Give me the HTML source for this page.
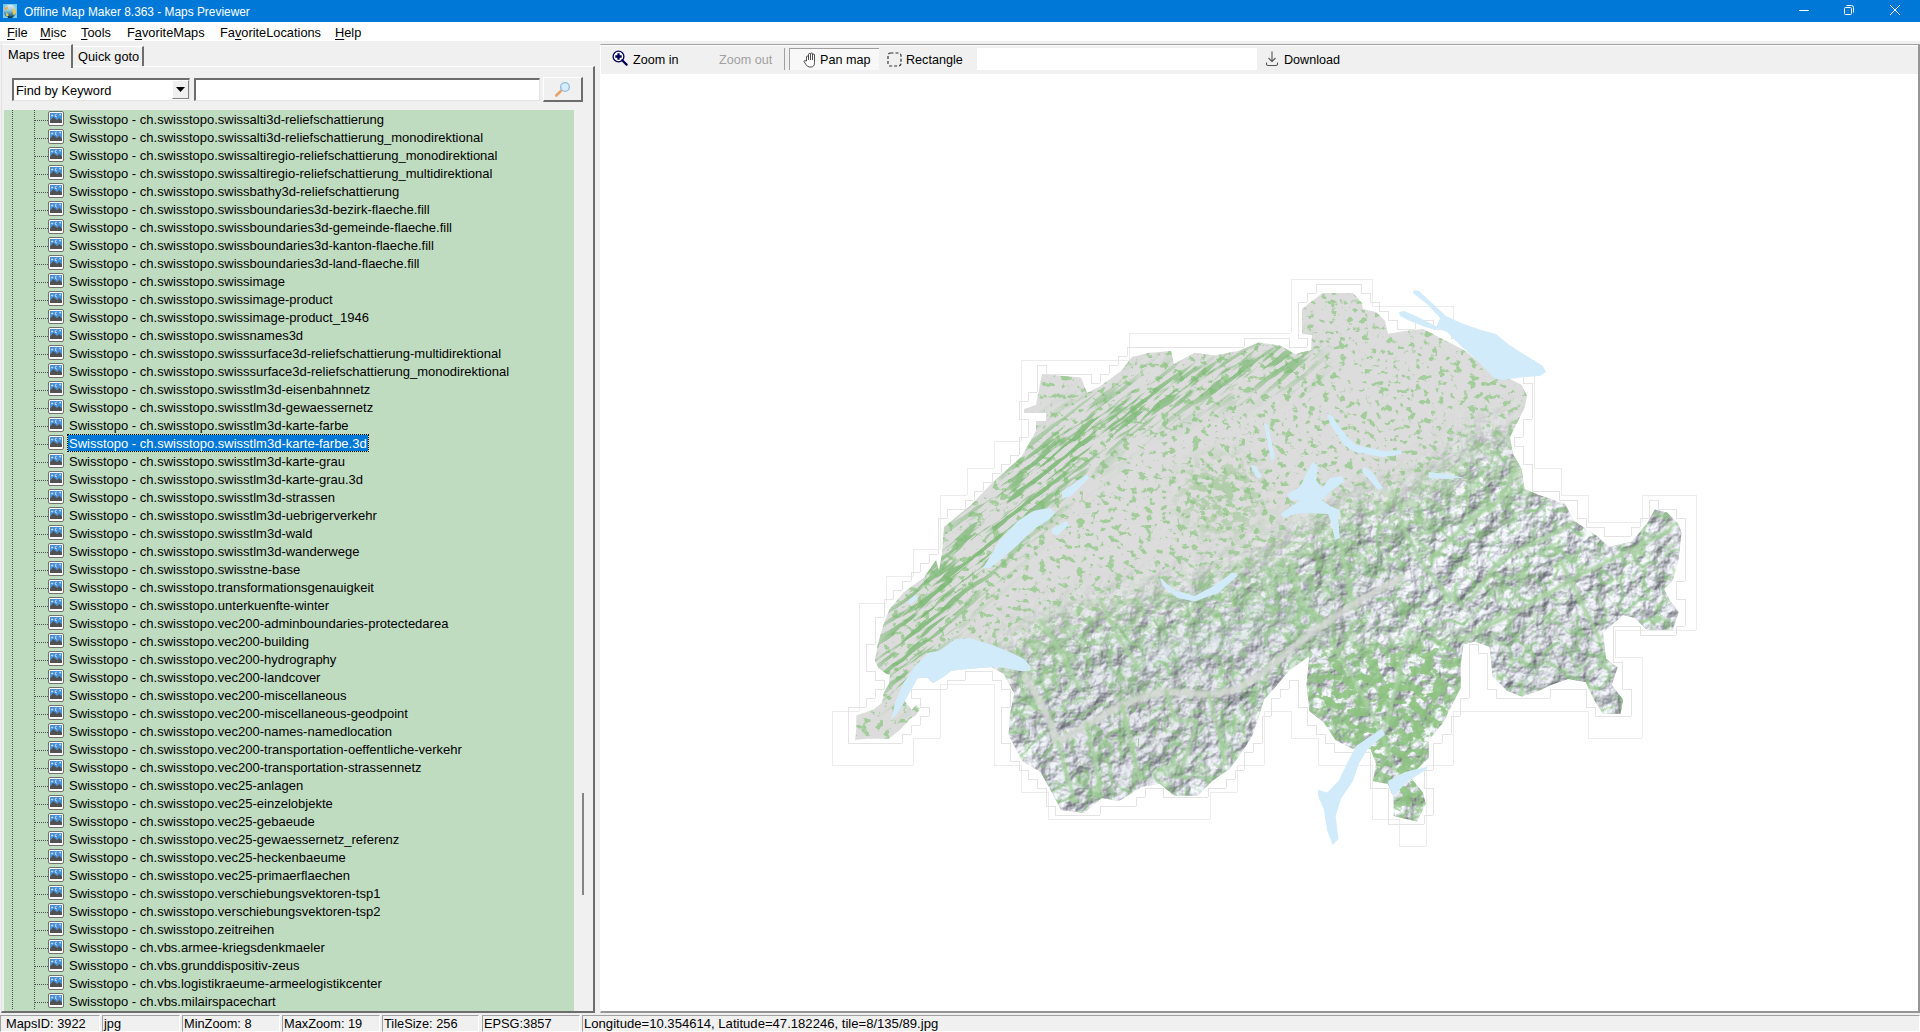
<!DOCTYPE html>
<html><head><meta charset="utf-8"><style>
*{box-sizing:border-box;margin:0;padding:0}
html,body{width:1920px;height:1032px;overflow:hidden;background:#f0f0f0;font-family:"Liberation Sans",sans-serif;color:#000}
.abs{position:absolute}
#title{position:absolute;left:0;top:0;width:1920px;height:22px;background:#0078d7;color:#fff;font-size:11.9px}
#title .txt{position:absolute;left:24px;top:5px;line-height:14px;white-space:nowrap}
#menu{position:absolute;left:0;top:22px;width:1920px;height:19px;background:#fff;font-size:12.8px}
#menu span{position:absolute;top:3px;line-height:15px;white-space:nowrap}
.u{text-decoration:underline;text-underline-offset:2px}
.tab{position:absolute;font-size:12.8px;white-space:nowrap;z-index:3}
#page{position:absolute;left:1px;top:66px;width:594px;height:947px;border-left:1px solid #e3e3e3;border-top:1px solid #fff;border-right:2px solid #6d6d6d;border-bottom:2px solid #6d6d6d;}
#tree{position:absolute;left:4px;top:110px;width:570px;height:901px;background:#c0dcc0;overflow:hidden}
.row{position:absolute;left:0;width:570px;height:18px}
.row .ic{position:absolute;left:44px;top:1px}
.row .t{position:absolute;left:64px;top:2px;font-size:13px;line-height:16px;white-space:nowrap;padding:0 1px}
.row .t.sel{background:#0078d7;color:#fff;outline:1px dotted #000;outline-offset:0;top:1px;padding-top:1px;height:16px}
.vdots{position:absolute;top:0;width:1px;height:900px;background:repeating-linear-gradient(#505050 0 1px,transparent 1px 2px)}
.hdots{position:absolute;left:31px;top:10px;width:13px;height:1px;background:repeating-linear-gradient(90deg,#505050 0 1px,transparent 1px 2px)}
#status{position:absolute;left:0;top:1014px;width:1920px;height:18px;font-size:12.8px}
.sp{position:absolute;top:1px;height:17px;border-top:1px solid #a0a0a0;border-left:1px solid #a0a0a0;border-right:1px solid #fff;border-bottom:1px solid #fff;white-space:nowrap;padding-left:1px;line-height:15px}
#mappanel{position:absolute;left:600px;top:44px;width:1320px;height:969px;border-top:1px solid #a0a0a0;border-left:1px solid #fff;border-right:2px solid #969696;border-bottom:2px solid #969696;background:#fff}
#toolbar{position:absolute;left:0;top:1px;width:1317px;height:28px;background:#f0f0f0;font-size:12.6px}
#toolbar span{position:absolute;top:7px;line-height:15px;white-space:nowrap}
</style></head><body>
<div id="title">
 <svg class="abs" style="left:3px;top:4px" width="15" height="15" viewBox="0 0 15 15"><defs><linearGradient id="gl" x1="0" y1="0" x2="0" y2="1"><stop offset="0" stop-color="#e8f0e8"/><stop offset="0.45" stop-color="#8cc8e0"/><stop offset="1" stop-color="#0f4a66"/></linearGradient></defs><rect x="0" y="0" width="14" height="14" fill="#7ccbef"/><circle cx="7" cy="7.2" r="6.4" fill="url(#gl)"/><path d="M1.2 5 Q2.5 2.2 5 2.5 Q5.5 4.5 3.5 5.8 Q2 6.5 1.2 5Z" fill="#f0a850"/><path d="M9.8 4.2 Q12.8 5 13 8.5 Q12.5 11 10.5 11 Q9.5 8 9.8 4.2Z" fill="#f5c84a"/><path d="M3 8.8 Q5.5 9 5.6 11.5 Q4.5 13 3.2 12 Q2.8 10 3 8.8Z" fill="#d8c860"/><path d="M5 12 Q8 13.5 11 12 L9 14 H5Z" fill="#0a3a50"/></svg>
 <div class="txt">Offline Map Maker 8.363 - Maps Previewer</div>
 <svg class="abs" style="left:1790px;top:0" width="130" height="22" viewBox="0 0 130 22">
  <line x1="9" y1="10.5" x2="19" y2="10.5" stroke="#fff" stroke-width="1"/>
  <rect x="54.5" y="7.5" width="7" height="7" fill="none" stroke="#fff" stroke-width="1" rx="1"/>
  <path d="M56.5 5.5 h5 a2 2 0 0 1 2 2 v5" fill="none" stroke="#fff" stroke-width="1"/>
  <path d="M100 5 L110 15 M110 5 L100 15" stroke="#fff" stroke-width="1"/>
 </svg>
</div>
<div id="menu">
 <span style="left:7px"><span class="u" style="position:static">F</span>ile</span>
 <span style="left:40px"><span class="u" style="position:static">M</span>isc</span>
 <span style="left:81px"><span class="u" style="position:static">T</span>ools</span>
 <span style="left:127px">F<span class="u" style="position:static">a</span>voriteMaps</span>
 <span style="left:220px">Fa<span class="u" style="position:static">v</span>oriteLocations</span>
 <span style="left:335px"><span class="u" style="position:static">H</span>elp</span>
</div>
<!-- tabs -->
<div class="abs" style="left:1px;top:44px;width:72px;height:24px;background:#f0f0f0;border-top:1px solid #fff;border-left:1px solid #e3e3e3;border-right:2px solid #6d6d6d;z-index:2"></div>
<div class="tab" style="left:8px;top:47px">Maps tree</div>
<div class="abs" style="left:73px;top:46px;width:71px;height:20px;border-top:1px solid #fff;border-right:2px solid #6d6d6d"></div>
<div class="tab" style="left:78px;top:49px">Quick goto</div>
<div id="page"></div>
<!-- combobox -->
<div class="abs" style="left:12px;top:78px;width:178px;height:23px;background:#fff;border-top:2px solid #6d6d6d;border-left:2px solid #6d6d6d;border-right:1px solid #e3e3e3;border-bottom:1px solid #e3e3e3"></div>
<div class="abs" style="left:16px;top:83px;font-size:12.8px;line-height:15px">Find by Keyword</div>
<div class="abs" style="left:172px;top:80px;width:17px;height:19px;background:#f0f0f0;border-right:1px solid #808080;border-bottom:1px solid #808080;border-top:1px solid #fff;border-left:1px solid #fff"></div>
<svg class="abs" style="left:176px;top:87px" width="9" height="5"><path d="M0 0 H9 L4.5 5Z" fill="#000"/></svg>
<div class="abs" style="left:194px;top:78px;width:346px;height:23px;background:#fff;border-top:2px solid #6d6d6d;border-left:2px solid #6d6d6d;border-right:1px solid #e3e3e3;border-bottom:1px solid #e3e3e3"></div>
<div class="abs" style="left:543px;top:77px;width:40px;height:25px;background:#f0f0f0;border-top:1px solid #fff;border-left:1px solid #fff;border-right:2px solid #6d6d6d;border-bottom:2px solid #6d6d6d"></div>
<svg class="abs" style="left:554px;top:80px" width="18" height="18" viewBox="0 0 18 18"><line x1="2.3" y1="15.5" x2="7.5" y2="10.3" stroke="#e8a268" stroke-width="2.6" stroke-linecap="round"/><circle cx="11" cy="7" r="4.4" fill="#d4ecfc" stroke="#96bde0" stroke-width="1.4"/></svg>
<div id="tree">
 <div class="vdots" style="left:8px"></div>
 <div class="vdots" style="left:30px"></div>
<div class="row" style="top:0px"><div class="hdots"></div><svg class="ic" width="16" height="15" viewBox="0 0 16 15"><rect x="0.5" y="0.5" width="15" height="14" rx="1.5" fill="#fff" stroke="#707070"/><rect x="2" y="2" width="12" height="10" fill="#4790d8"/><path d="M2 12 L2 9.5 L5.5 6 L9 9 L11.5 7 L14 9.5 L14 12Z" fill="#525252"/><path d="M3.2 4.5 H5.2 M4.2 3.5 V5.5 M11.3 3.6 H13.1 M12.2 2.7 V4.5" stroke="#d8ecff" stroke-width="0.8"/><path d="M8.6 3.2 a1.4 1.4 0 1 0 0.2 2.8" stroke="#e8f4ff" stroke-width="0.9" fill="none"/></svg><span class="t">Swisstopo - ch.swisstopo.swissalti3d-reliefschattierung</span></div>
<div class="row" style="top:18px"><div class="hdots"></div><svg class="ic" width="16" height="15" viewBox="0 0 16 15"><rect x="0.5" y="0.5" width="15" height="14" rx="1.5" fill="#fff" stroke="#707070"/><rect x="2" y="2" width="12" height="10" fill="#4790d8"/><path d="M2 12 L2 9.5 L5.5 6 L9 9 L11.5 7 L14 9.5 L14 12Z" fill="#525252"/><path d="M3.2 4.5 H5.2 M4.2 3.5 V5.5 M11.3 3.6 H13.1 M12.2 2.7 V4.5" stroke="#d8ecff" stroke-width="0.8"/><path d="M8.6 3.2 a1.4 1.4 0 1 0 0.2 2.8" stroke="#e8f4ff" stroke-width="0.9" fill="none"/></svg><span class="t">Swisstopo - ch.swisstopo.swissalti3d-reliefschattierung_monodirektional</span></div>
<div class="row" style="top:36px"><div class="hdots"></div><svg class="ic" width="16" height="15" viewBox="0 0 16 15"><rect x="0.5" y="0.5" width="15" height="14" rx="1.5" fill="#fff" stroke="#707070"/><rect x="2" y="2" width="12" height="10" fill="#4790d8"/><path d="M2 12 L2 9.5 L5.5 6 L9 9 L11.5 7 L14 9.5 L14 12Z" fill="#525252"/><path d="M3.2 4.5 H5.2 M4.2 3.5 V5.5 M11.3 3.6 H13.1 M12.2 2.7 V4.5" stroke="#d8ecff" stroke-width="0.8"/><path d="M8.6 3.2 a1.4 1.4 0 1 0 0.2 2.8" stroke="#e8f4ff" stroke-width="0.9" fill="none"/></svg><span class="t">Swisstopo - ch.swisstopo.swissaltiregio-reliefschattierung_monodirektional</span></div>
<div class="row" style="top:54px"><div class="hdots"></div><svg class="ic" width="16" height="15" viewBox="0 0 16 15"><rect x="0.5" y="0.5" width="15" height="14" rx="1.5" fill="#fff" stroke="#707070"/><rect x="2" y="2" width="12" height="10" fill="#4790d8"/><path d="M2 12 L2 9.5 L5.5 6 L9 9 L11.5 7 L14 9.5 L14 12Z" fill="#525252"/><path d="M3.2 4.5 H5.2 M4.2 3.5 V5.5 M11.3 3.6 H13.1 M12.2 2.7 V4.5" stroke="#d8ecff" stroke-width="0.8"/><path d="M8.6 3.2 a1.4 1.4 0 1 0 0.2 2.8" stroke="#e8f4ff" stroke-width="0.9" fill="none"/></svg><span class="t">Swisstopo - ch.swisstopo.swissaltiregio-reliefschattierung_multidirektional</span></div>
<div class="row" style="top:72px"><div class="hdots"></div><svg class="ic" width="16" height="15" viewBox="0 0 16 15"><rect x="0.5" y="0.5" width="15" height="14" rx="1.5" fill="#fff" stroke="#707070"/><rect x="2" y="2" width="12" height="10" fill="#4790d8"/><path d="M2 12 L2 9.5 L5.5 6 L9 9 L11.5 7 L14 9.5 L14 12Z" fill="#525252"/><path d="M3.2 4.5 H5.2 M4.2 3.5 V5.5 M11.3 3.6 H13.1 M12.2 2.7 V4.5" stroke="#d8ecff" stroke-width="0.8"/><path d="M8.6 3.2 a1.4 1.4 0 1 0 0.2 2.8" stroke="#e8f4ff" stroke-width="0.9" fill="none"/></svg><span class="t">Swisstopo - ch.swisstopo.swissbathy3d-reliefschattierung</span></div>
<div class="row" style="top:90px"><div class="hdots"></div><svg class="ic" width="16" height="15" viewBox="0 0 16 15"><rect x="0.5" y="0.5" width="15" height="14" rx="1.5" fill="#fff" stroke="#707070"/><rect x="2" y="2" width="12" height="10" fill="#4790d8"/><path d="M2 12 L2 9.5 L5.5 6 L9 9 L11.5 7 L14 9.5 L14 12Z" fill="#525252"/><path d="M3.2 4.5 H5.2 M4.2 3.5 V5.5 M11.3 3.6 H13.1 M12.2 2.7 V4.5" stroke="#d8ecff" stroke-width="0.8"/><path d="M8.6 3.2 a1.4 1.4 0 1 0 0.2 2.8" stroke="#e8f4ff" stroke-width="0.9" fill="none"/></svg><span class="t">Swisstopo - ch.swisstopo.swissboundaries3d-bezirk-flaeche.fill</span></div>
<div class="row" style="top:108px"><div class="hdots"></div><svg class="ic" width="16" height="15" viewBox="0 0 16 15"><rect x="0.5" y="0.5" width="15" height="14" rx="1.5" fill="#fff" stroke="#707070"/><rect x="2" y="2" width="12" height="10" fill="#4790d8"/><path d="M2 12 L2 9.5 L5.5 6 L9 9 L11.5 7 L14 9.5 L14 12Z" fill="#525252"/><path d="M3.2 4.5 H5.2 M4.2 3.5 V5.5 M11.3 3.6 H13.1 M12.2 2.7 V4.5" stroke="#d8ecff" stroke-width="0.8"/><path d="M8.6 3.2 a1.4 1.4 0 1 0 0.2 2.8" stroke="#e8f4ff" stroke-width="0.9" fill="none"/></svg><span class="t">Swisstopo - ch.swisstopo.swissboundaries3d-gemeinde-flaeche.fill</span></div>
<div class="row" style="top:126px"><div class="hdots"></div><svg class="ic" width="16" height="15" viewBox="0 0 16 15"><rect x="0.5" y="0.5" width="15" height="14" rx="1.5" fill="#fff" stroke="#707070"/><rect x="2" y="2" width="12" height="10" fill="#4790d8"/><path d="M2 12 L2 9.5 L5.5 6 L9 9 L11.5 7 L14 9.5 L14 12Z" fill="#525252"/><path d="M3.2 4.5 H5.2 M4.2 3.5 V5.5 M11.3 3.6 H13.1 M12.2 2.7 V4.5" stroke="#d8ecff" stroke-width="0.8"/><path d="M8.6 3.2 a1.4 1.4 0 1 0 0.2 2.8" stroke="#e8f4ff" stroke-width="0.9" fill="none"/></svg><span class="t">Swisstopo - ch.swisstopo.swissboundaries3d-kanton-flaeche.fill</span></div>
<div class="row" style="top:144px"><div class="hdots"></div><svg class="ic" width="16" height="15" viewBox="0 0 16 15"><rect x="0.5" y="0.5" width="15" height="14" rx="1.5" fill="#fff" stroke="#707070"/><rect x="2" y="2" width="12" height="10" fill="#4790d8"/><path d="M2 12 L2 9.5 L5.5 6 L9 9 L11.5 7 L14 9.5 L14 12Z" fill="#525252"/><path d="M3.2 4.5 H5.2 M4.2 3.5 V5.5 M11.3 3.6 H13.1 M12.2 2.7 V4.5" stroke="#d8ecff" stroke-width="0.8"/><path d="M8.6 3.2 a1.4 1.4 0 1 0 0.2 2.8" stroke="#e8f4ff" stroke-width="0.9" fill="none"/></svg><span class="t">Swisstopo - ch.swisstopo.swissboundaries3d-land-flaeche.fill</span></div>
<div class="row" style="top:162px"><div class="hdots"></div><svg class="ic" width="16" height="15" viewBox="0 0 16 15"><rect x="0.5" y="0.5" width="15" height="14" rx="1.5" fill="#fff" stroke="#707070"/><rect x="2" y="2" width="12" height="10" fill="#4790d8"/><path d="M2 12 L2 9.5 L5.5 6 L9 9 L11.5 7 L14 9.5 L14 12Z" fill="#525252"/><path d="M3.2 4.5 H5.2 M4.2 3.5 V5.5 M11.3 3.6 H13.1 M12.2 2.7 V4.5" stroke="#d8ecff" stroke-width="0.8"/><path d="M8.6 3.2 a1.4 1.4 0 1 0 0.2 2.8" stroke="#e8f4ff" stroke-width="0.9" fill="none"/></svg><span class="t">Swisstopo - ch.swisstopo.swissimage</span></div>
<div class="row" style="top:180px"><div class="hdots"></div><svg class="ic" width="16" height="15" viewBox="0 0 16 15"><rect x="0.5" y="0.5" width="15" height="14" rx="1.5" fill="#fff" stroke="#707070"/><rect x="2" y="2" width="12" height="10" fill="#4790d8"/><path d="M2 12 L2 9.5 L5.5 6 L9 9 L11.5 7 L14 9.5 L14 12Z" fill="#525252"/><path d="M3.2 4.5 H5.2 M4.2 3.5 V5.5 M11.3 3.6 H13.1 M12.2 2.7 V4.5" stroke="#d8ecff" stroke-width="0.8"/><path d="M8.6 3.2 a1.4 1.4 0 1 0 0.2 2.8" stroke="#e8f4ff" stroke-width="0.9" fill="none"/></svg><span class="t">Swisstopo - ch.swisstopo.swissimage-product</span></div>
<div class="row" style="top:198px"><div class="hdots"></div><svg class="ic" width="16" height="15" viewBox="0 0 16 15"><rect x="0.5" y="0.5" width="15" height="14" rx="1.5" fill="#fff" stroke="#707070"/><rect x="2" y="2" width="12" height="10" fill="#4790d8"/><path d="M2 12 L2 9.5 L5.5 6 L9 9 L11.5 7 L14 9.5 L14 12Z" fill="#525252"/><path d="M3.2 4.5 H5.2 M4.2 3.5 V5.5 M11.3 3.6 H13.1 M12.2 2.7 V4.5" stroke="#d8ecff" stroke-width="0.8"/><path d="M8.6 3.2 a1.4 1.4 0 1 0 0.2 2.8" stroke="#e8f4ff" stroke-width="0.9" fill="none"/></svg><span class="t">Swisstopo - ch.swisstopo.swissimage-product_1946</span></div>
<div class="row" style="top:216px"><div class="hdots"></div><svg class="ic" width="16" height="15" viewBox="0 0 16 15"><rect x="0.5" y="0.5" width="15" height="14" rx="1.5" fill="#fff" stroke="#707070"/><rect x="2" y="2" width="12" height="10" fill="#4790d8"/><path d="M2 12 L2 9.5 L5.5 6 L9 9 L11.5 7 L14 9.5 L14 12Z" fill="#525252"/><path d="M3.2 4.5 H5.2 M4.2 3.5 V5.5 M11.3 3.6 H13.1 M12.2 2.7 V4.5" stroke="#d8ecff" stroke-width="0.8"/><path d="M8.6 3.2 a1.4 1.4 0 1 0 0.2 2.8" stroke="#e8f4ff" stroke-width="0.9" fill="none"/></svg><span class="t">Swisstopo - ch.swisstopo.swissnames3d</span></div>
<div class="row" style="top:234px"><div class="hdots"></div><svg class="ic" width="16" height="15" viewBox="0 0 16 15"><rect x="0.5" y="0.5" width="15" height="14" rx="1.5" fill="#fff" stroke="#707070"/><rect x="2" y="2" width="12" height="10" fill="#4790d8"/><path d="M2 12 L2 9.5 L5.5 6 L9 9 L11.5 7 L14 9.5 L14 12Z" fill="#525252"/><path d="M3.2 4.5 H5.2 M4.2 3.5 V5.5 M11.3 3.6 H13.1 M12.2 2.7 V4.5" stroke="#d8ecff" stroke-width="0.8"/><path d="M8.6 3.2 a1.4 1.4 0 1 0 0.2 2.8" stroke="#e8f4ff" stroke-width="0.9" fill="none"/></svg><span class="t">Swisstopo - ch.swisstopo.swisssurface3d-reliefschattierung-multidirektional</span></div>
<div class="row" style="top:252px"><div class="hdots"></div><svg class="ic" width="16" height="15" viewBox="0 0 16 15"><rect x="0.5" y="0.5" width="15" height="14" rx="1.5" fill="#fff" stroke="#707070"/><rect x="2" y="2" width="12" height="10" fill="#4790d8"/><path d="M2 12 L2 9.5 L5.5 6 L9 9 L11.5 7 L14 9.5 L14 12Z" fill="#525252"/><path d="M3.2 4.5 H5.2 M4.2 3.5 V5.5 M11.3 3.6 H13.1 M12.2 2.7 V4.5" stroke="#d8ecff" stroke-width="0.8"/><path d="M8.6 3.2 a1.4 1.4 0 1 0 0.2 2.8" stroke="#e8f4ff" stroke-width="0.9" fill="none"/></svg><span class="t">Swisstopo - ch.swisstopo.swisssurface3d-reliefschattierung_monodirektional</span></div>
<div class="row" style="top:270px"><div class="hdots"></div><svg class="ic" width="16" height="15" viewBox="0 0 16 15"><rect x="0.5" y="0.5" width="15" height="14" rx="1.5" fill="#fff" stroke="#707070"/><rect x="2" y="2" width="12" height="10" fill="#4790d8"/><path d="M2 12 L2 9.5 L5.5 6 L9 9 L11.5 7 L14 9.5 L14 12Z" fill="#525252"/><path d="M3.2 4.5 H5.2 M4.2 3.5 V5.5 M11.3 3.6 H13.1 M12.2 2.7 V4.5" stroke="#d8ecff" stroke-width="0.8"/><path d="M8.6 3.2 a1.4 1.4 0 1 0 0.2 2.8" stroke="#e8f4ff" stroke-width="0.9" fill="none"/></svg><span class="t">Swisstopo - ch.swisstopo.swisstlm3d-eisenbahnnetz</span></div>
<div class="row" style="top:288px"><div class="hdots"></div><svg class="ic" width="16" height="15" viewBox="0 0 16 15"><rect x="0.5" y="0.5" width="15" height="14" rx="1.5" fill="#fff" stroke="#707070"/><rect x="2" y="2" width="12" height="10" fill="#4790d8"/><path d="M2 12 L2 9.5 L5.5 6 L9 9 L11.5 7 L14 9.5 L14 12Z" fill="#525252"/><path d="M3.2 4.5 H5.2 M4.2 3.5 V5.5 M11.3 3.6 H13.1 M12.2 2.7 V4.5" stroke="#d8ecff" stroke-width="0.8"/><path d="M8.6 3.2 a1.4 1.4 0 1 0 0.2 2.8" stroke="#e8f4ff" stroke-width="0.9" fill="none"/></svg><span class="t">Swisstopo - ch.swisstopo.swisstlm3d-gewaessernetz</span></div>
<div class="row" style="top:306px"><div class="hdots"></div><svg class="ic" width="16" height="15" viewBox="0 0 16 15"><rect x="0.5" y="0.5" width="15" height="14" rx="1.5" fill="#fff" stroke="#707070"/><rect x="2" y="2" width="12" height="10" fill="#4790d8"/><path d="M2 12 L2 9.5 L5.5 6 L9 9 L11.5 7 L14 9.5 L14 12Z" fill="#525252"/><path d="M3.2 4.5 H5.2 M4.2 3.5 V5.5 M11.3 3.6 H13.1 M12.2 2.7 V4.5" stroke="#d8ecff" stroke-width="0.8"/><path d="M8.6 3.2 a1.4 1.4 0 1 0 0.2 2.8" stroke="#e8f4ff" stroke-width="0.9" fill="none"/></svg><span class="t">Swisstopo - ch.swisstopo.swisstlm3d-karte-farbe</span></div>
<div class="row" style="top:324px"><div class="hdots"></div><svg class="ic" width="16" height="15" viewBox="0 0 16 15"><rect x="0.5" y="0.5" width="15" height="14" rx="1.5" fill="#fff" stroke="#707070"/><rect x="2" y="2" width="12" height="10" fill="#4790d8"/><path d="M2 12 L2 9.5 L5.5 6 L9 9 L11.5 7 L14 9.5 L14 12Z" fill="#525252"/><path d="M3.2 4.5 H5.2 M4.2 3.5 V5.5 M11.3 3.6 H13.1 M12.2 2.7 V4.5" stroke="#d8ecff" stroke-width="0.8"/><path d="M8.6 3.2 a1.4 1.4 0 1 0 0.2 2.8" stroke="#e8f4ff" stroke-width="0.9" fill="none"/></svg><span class="t sel">Swisstopo - ch.swisstopo.swisstlm3d-karte-farbe.3d</span></div>
<div class="row" style="top:342px"><div class="hdots"></div><svg class="ic" width="16" height="15" viewBox="0 0 16 15"><rect x="0.5" y="0.5" width="15" height="14" rx="1.5" fill="#fff" stroke="#707070"/><rect x="2" y="2" width="12" height="10" fill="#4790d8"/><path d="M2 12 L2 9.5 L5.5 6 L9 9 L11.5 7 L14 9.5 L14 12Z" fill="#525252"/><path d="M3.2 4.5 H5.2 M4.2 3.5 V5.5 M11.3 3.6 H13.1 M12.2 2.7 V4.5" stroke="#d8ecff" stroke-width="0.8"/><path d="M8.6 3.2 a1.4 1.4 0 1 0 0.2 2.8" stroke="#e8f4ff" stroke-width="0.9" fill="none"/></svg><span class="t">Swisstopo - ch.swisstopo.swisstlm3d-karte-grau</span></div>
<div class="row" style="top:360px"><div class="hdots"></div><svg class="ic" width="16" height="15" viewBox="0 0 16 15"><rect x="0.5" y="0.5" width="15" height="14" rx="1.5" fill="#fff" stroke="#707070"/><rect x="2" y="2" width="12" height="10" fill="#4790d8"/><path d="M2 12 L2 9.5 L5.5 6 L9 9 L11.5 7 L14 9.5 L14 12Z" fill="#525252"/><path d="M3.2 4.5 H5.2 M4.2 3.5 V5.5 M11.3 3.6 H13.1 M12.2 2.7 V4.5" stroke="#d8ecff" stroke-width="0.8"/><path d="M8.6 3.2 a1.4 1.4 0 1 0 0.2 2.8" stroke="#e8f4ff" stroke-width="0.9" fill="none"/></svg><span class="t">Swisstopo - ch.swisstopo.swisstlm3d-karte-grau.3d</span></div>
<div class="row" style="top:378px"><div class="hdots"></div><svg class="ic" width="16" height="15" viewBox="0 0 16 15"><rect x="0.5" y="0.5" width="15" height="14" rx="1.5" fill="#fff" stroke="#707070"/><rect x="2" y="2" width="12" height="10" fill="#4790d8"/><path d="M2 12 L2 9.5 L5.5 6 L9 9 L11.5 7 L14 9.5 L14 12Z" fill="#525252"/><path d="M3.2 4.5 H5.2 M4.2 3.5 V5.5 M11.3 3.6 H13.1 M12.2 2.7 V4.5" stroke="#d8ecff" stroke-width="0.8"/><path d="M8.6 3.2 a1.4 1.4 0 1 0 0.2 2.8" stroke="#e8f4ff" stroke-width="0.9" fill="none"/></svg><span class="t">Swisstopo - ch.swisstopo.swisstlm3d-strassen</span></div>
<div class="row" style="top:396px"><div class="hdots"></div><svg class="ic" width="16" height="15" viewBox="0 0 16 15"><rect x="0.5" y="0.5" width="15" height="14" rx="1.5" fill="#fff" stroke="#707070"/><rect x="2" y="2" width="12" height="10" fill="#4790d8"/><path d="M2 12 L2 9.5 L5.5 6 L9 9 L11.5 7 L14 9.5 L14 12Z" fill="#525252"/><path d="M3.2 4.5 H5.2 M4.2 3.5 V5.5 M11.3 3.6 H13.1 M12.2 2.7 V4.5" stroke="#d8ecff" stroke-width="0.8"/><path d="M8.6 3.2 a1.4 1.4 0 1 0 0.2 2.8" stroke="#e8f4ff" stroke-width="0.9" fill="none"/></svg><span class="t">Swisstopo - ch.swisstopo.swisstlm3d-uebrigerverkehr</span></div>
<div class="row" style="top:414px"><div class="hdots"></div><svg class="ic" width="16" height="15" viewBox="0 0 16 15"><rect x="0.5" y="0.5" width="15" height="14" rx="1.5" fill="#fff" stroke="#707070"/><rect x="2" y="2" width="12" height="10" fill="#4790d8"/><path d="M2 12 L2 9.5 L5.5 6 L9 9 L11.5 7 L14 9.5 L14 12Z" fill="#525252"/><path d="M3.2 4.5 H5.2 M4.2 3.5 V5.5 M11.3 3.6 H13.1 M12.2 2.7 V4.5" stroke="#d8ecff" stroke-width="0.8"/><path d="M8.6 3.2 a1.4 1.4 0 1 0 0.2 2.8" stroke="#e8f4ff" stroke-width="0.9" fill="none"/></svg><span class="t">Swisstopo - ch.swisstopo.swisstlm3d-wald</span></div>
<div class="row" style="top:432px"><div class="hdots"></div><svg class="ic" width="16" height="15" viewBox="0 0 16 15"><rect x="0.5" y="0.5" width="15" height="14" rx="1.5" fill="#fff" stroke="#707070"/><rect x="2" y="2" width="12" height="10" fill="#4790d8"/><path d="M2 12 L2 9.5 L5.5 6 L9 9 L11.5 7 L14 9.5 L14 12Z" fill="#525252"/><path d="M3.2 4.5 H5.2 M4.2 3.5 V5.5 M11.3 3.6 H13.1 M12.2 2.7 V4.5" stroke="#d8ecff" stroke-width="0.8"/><path d="M8.6 3.2 a1.4 1.4 0 1 0 0.2 2.8" stroke="#e8f4ff" stroke-width="0.9" fill="none"/></svg><span class="t">Swisstopo - ch.swisstopo.swisstlm3d-wanderwege</span></div>
<div class="row" style="top:450px"><div class="hdots"></div><svg class="ic" width="16" height="15" viewBox="0 0 16 15"><rect x="0.5" y="0.5" width="15" height="14" rx="1.5" fill="#fff" stroke="#707070"/><rect x="2" y="2" width="12" height="10" fill="#4790d8"/><path d="M2 12 L2 9.5 L5.5 6 L9 9 L11.5 7 L14 9.5 L14 12Z" fill="#525252"/><path d="M3.2 4.5 H5.2 M4.2 3.5 V5.5 M11.3 3.6 H13.1 M12.2 2.7 V4.5" stroke="#d8ecff" stroke-width="0.8"/><path d="M8.6 3.2 a1.4 1.4 0 1 0 0.2 2.8" stroke="#e8f4ff" stroke-width="0.9" fill="none"/></svg><span class="t">Swisstopo - ch.swisstopo.swisstne-base</span></div>
<div class="row" style="top:468px"><div class="hdots"></div><svg class="ic" width="16" height="15" viewBox="0 0 16 15"><rect x="0.5" y="0.5" width="15" height="14" rx="1.5" fill="#fff" stroke="#707070"/><rect x="2" y="2" width="12" height="10" fill="#4790d8"/><path d="M2 12 L2 9.5 L5.5 6 L9 9 L11.5 7 L14 9.5 L14 12Z" fill="#525252"/><path d="M3.2 4.5 H5.2 M4.2 3.5 V5.5 M11.3 3.6 H13.1 M12.2 2.7 V4.5" stroke="#d8ecff" stroke-width="0.8"/><path d="M8.6 3.2 a1.4 1.4 0 1 0 0.2 2.8" stroke="#e8f4ff" stroke-width="0.9" fill="none"/></svg><span class="t">Swisstopo - ch.swisstopo.transformationsgenauigkeit</span></div>
<div class="row" style="top:486px"><div class="hdots"></div><svg class="ic" width="16" height="15" viewBox="0 0 16 15"><rect x="0.5" y="0.5" width="15" height="14" rx="1.5" fill="#fff" stroke="#707070"/><rect x="2" y="2" width="12" height="10" fill="#4790d8"/><path d="M2 12 L2 9.5 L5.5 6 L9 9 L11.5 7 L14 9.5 L14 12Z" fill="#525252"/><path d="M3.2 4.5 H5.2 M4.2 3.5 V5.5 M11.3 3.6 H13.1 M12.2 2.7 V4.5" stroke="#d8ecff" stroke-width="0.8"/><path d="M8.6 3.2 a1.4 1.4 0 1 0 0.2 2.8" stroke="#e8f4ff" stroke-width="0.9" fill="none"/></svg><span class="t">Swisstopo - ch.swisstopo.unterkuenfte-winter</span></div>
<div class="row" style="top:504px"><div class="hdots"></div><svg class="ic" width="16" height="15" viewBox="0 0 16 15"><rect x="0.5" y="0.5" width="15" height="14" rx="1.5" fill="#fff" stroke="#707070"/><rect x="2" y="2" width="12" height="10" fill="#4790d8"/><path d="M2 12 L2 9.5 L5.5 6 L9 9 L11.5 7 L14 9.5 L14 12Z" fill="#525252"/><path d="M3.2 4.5 H5.2 M4.2 3.5 V5.5 M11.3 3.6 H13.1 M12.2 2.7 V4.5" stroke="#d8ecff" stroke-width="0.8"/><path d="M8.6 3.2 a1.4 1.4 0 1 0 0.2 2.8" stroke="#e8f4ff" stroke-width="0.9" fill="none"/></svg><span class="t">Swisstopo - ch.swisstopo.vec200-adminboundaries-protectedarea</span></div>
<div class="row" style="top:522px"><div class="hdots"></div><svg class="ic" width="16" height="15" viewBox="0 0 16 15"><rect x="0.5" y="0.5" width="15" height="14" rx="1.5" fill="#fff" stroke="#707070"/><rect x="2" y="2" width="12" height="10" fill="#4790d8"/><path d="M2 12 L2 9.5 L5.5 6 L9 9 L11.5 7 L14 9.5 L14 12Z" fill="#525252"/><path d="M3.2 4.5 H5.2 M4.2 3.5 V5.5 M11.3 3.6 H13.1 M12.2 2.7 V4.5" stroke="#d8ecff" stroke-width="0.8"/><path d="M8.6 3.2 a1.4 1.4 0 1 0 0.2 2.8" stroke="#e8f4ff" stroke-width="0.9" fill="none"/></svg><span class="t">Swisstopo - ch.swisstopo.vec200-building</span></div>
<div class="row" style="top:540px"><div class="hdots"></div><svg class="ic" width="16" height="15" viewBox="0 0 16 15"><rect x="0.5" y="0.5" width="15" height="14" rx="1.5" fill="#fff" stroke="#707070"/><rect x="2" y="2" width="12" height="10" fill="#4790d8"/><path d="M2 12 L2 9.5 L5.5 6 L9 9 L11.5 7 L14 9.5 L14 12Z" fill="#525252"/><path d="M3.2 4.5 H5.2 M4.2 3.5 V5.5 M11.3 3.6 H13.1 M12.2 2.7 V4.5" stroke="#d8ecff" stroke-width="0.8"/><path d="M8.6 3.2 a1.4 1.4 0 1 0 0.2 2.8" stroke="#e8f4ff" stroke-width="0.9" fill="none"/></svg><span class="t">Swisstopo - ch.swisstopo.vec200-hydrography</span></div>
<div class="row" style="top:558px"><div class="hdots"></div><svg class="ic" width="16" height="15" viewBox="0 0 16 15"><rect x="0.5" y="0.5" width="15" height="14" rx="1.5" fill="#fff" stroke="#707070"/><rect x="2" y="2" width="12" height="10" fill="#4790d8"/><path d="M2 12 L2 9.5 L5.5 6 L9 9 L11.5 7 L14 9.5 L14 12Z" fill="#525252"/><path d="M3.2 4.5 H5.2 M4.2 3.5 V5.5 M11.3 3.6 H13.1 M12.2 2.7 V4.5" stroke="#d8ecff" stroke-width="0.8"/><path d="M8.6 3.2 a1.4 1.4 0 1 0 0.2 2.8" stroke="#e8f4ff" stroke-width="0.9" fill="none"/></svg><span class="t">Swisstopo - ch.swisstopo.vec200-landcover</span></div>
<div class="row" style="top:576px"><div class="hdots"></div><svg class="ic" width="16" height="15" viewBox="0 0 16 15"><rect x="0.5" y="0.5" width="15" height="14" rx="1.5" fill="#fff" stroke="#707070"/><rect x="2" y="2" width="12" height="10" fill="#4790d8"/><path d="M2 12 L2 9.5 L5.5 6 L9 9 L11.5 7 L14 9.5 L14 12Z" fill="#525252"/><path d="M3.2 4.5 H5.2 M4.2 3.5 V5.5 M11.3 3.6 H13.1 M12.2 2.7 V4.5" stroke="#d8ecff" stroke-width="0.8"/><path d="M8.6 3.2 a1.4 1.4 0 1 0 0.2 2.8" stroke="#e8f4ff" stroke-width="0.9" fill="none"/></svg><span class="t">Swisstopo - ch.swisstopo.vec200-miscellaneous</span></div>
<div class="row" style="top:594px"><div class="hdots"></div><svg class="ic" width="16" height="15" viewBox="0 0 16 15"><rect x="0.5" y="0.5" width="15" height="14" rx="1.5" fill="#fff" stroke="#707070"/><rect x="2" y="2" width="12" height="10" fill="#4790d8"/><path d="M2 12 L2 9.5 L5.5 6 L9 9 L11.5 7 L14 9.5 L14 12Z" fill="#525252"/><path d="M3.2 4.5 H5.2 M4.2 3.5 V5.5 M11.3 3.6 H13.1 M12.2 2.7 V4.5" stroke="#d8ecff" stroke-width="0.8"/><path d="M8.6 3.2 a1.4 1.4 0 1 0 0.2 2.8" stroke="#e8f4ff" stroke-width="0.9" fill="none"/></svg><span class="t">Swisstopo - ch.swisstopo.vec200-miscellaneous-geodpoint</span></div>
<div class="row" style="top:612px"><div class="hdots"></div><svg class="ic" width="16" height="15" viewBox="0 0 16 15"><rect x="0.5" y="0.5" width="15" height="14" rx="1.5" fill="#fff" stroke="#707070"/><rect x="2" y="2" width="12" height="10" fill="#4790d8"/><path d="M2 12 L2 9.5 L5.5 6 L9 9 L11.5 7 L14 9.5 L14 12Z" fill="#525252"/><path d="M3.2 4.5 H5.2 M4.2 3.5 V5.5 M11.3 3.6 H13.1 M12.2 2.7 V4.5" stroke="#d8ecff" stroke-width="0.8"/><path d="M8.6 3.2 a1.4 1.4 0 1 0 0.2 2.8" stroke="#e8f4ff" stroke-width="0.9" fill="none"/></svg><span class="t">Swisstopo - ch.swisstopo.vec200-names-namedlocation</span></div>
<div class="row" style="top:630px"><div class="hdots"></div><svg class="ic" width="16" height="15" viewBox="0 0 16 15"><rect x="0.5" y="0.5" width="15" height="14" rx="1.5" fill="#fff" stroke="#707070"/><rect x="2" y="2" width="12" height="10" fill="#4790d8"/><path d="M2 12 L2 9.5 L5.5 6 L9 9 L11.5 7 L14 9.5 L14 12Z" fill="#525252"/><path d="M3.2 4.5 H5.2 M4.2 3.5 V5.5 M11.3 3.6 H13.1 M12.2 2.7 V4.5" stroke="#d8ecff" stroke-width="0.8"/><path d="M8.6 3.2 a1.4 1.4 0 1 0 0.2 2.8" stroke="#e8f4ff" stroke-width="0.9" fill="none"/></svg><span class="t">Swisstopo - ch.swisstopo.vec200-transportation-oeffentliche-verkehr</span></div>
<div class="row" style="top:648px"><div class="hdots"></div><svg class="ic" width="16" height="15" viewBox="0 0 16 15"><rect x="0.5" y="0.5" width="15" height="14" rx="1.5" fill="#fff" stroke="#707070"/><rect x="2" y="2" width="12" height="10" fill="#4790d8"/><path d="M2 12 L2 9.5 L5.5 6 L9 9 L11.5 7 L14 9.5 L14 12Z" fill="#525252"/><path d="M3.2 4.5 H5.2 M4.2 3.5 V5.5 M11.3 3.6 H13.1 M12.2 2.7 V4.5" stroke="#d8ecff" stroke-width="0.8"/><path d="M8.6 3.2 a1.4 1.4 0 1 0 0.2 2.8" stroke="#e8f4ff" stroke-width="0.9" fill="none"/></svg><span class="t">Swisstopo - ch.swisstopo.vec200-transportation-strassennetz</span></div>
<div class="row" style="top:666px"><div class="hdots"></div><svg class="ic" width="16" height="15" viewBox="0 0 16 15"><rect x="0.5" y="0.5" width="15" height="14" rx="1.5" fill="#fff" stroke="#707070"/><rect x="2" y="2" width="12" height="10" fill="#4790d8"/><path d="M2 12 L2 9.5 L5.5 6 L9 9 L11.5 7 L14 9.5 L14 12Z" fill="#525252"/><path d="M3.2 4.5 H5.2 M4.2 3.5 V5.5 M11.3 3.6 H13.1 M12.2 2.7 V4.5" stroke="#d8ecff" stroke-width="0.8"/><path d="M8.6 3.2 a1.4 1.4 0 1 0 0.2 2.8" stroke="#e8f4ff" stroke-width="0.9" fill="none"/></svg><span class="t">Swisstopo - ch.swisstopo.vec25-anlagen</span></div>
<div class="row" style="top:684px"><div class="hdots"></div><svg class="ic" width="16" height="15" viewBox="0 0 16 15"><rect x="0.5" y="0.5" width="15" height="14" rx="1.5" fill="#fff" stroke="#707070"/><rect x="2" y="2" width="12" height="10" fill="#4790d8"/><path d="M2 12 L2 9.5 L5.5 6 L9 9 L11.5 7 L14 9.5 L14 12Z" fill="#525252"/><path d="M3.2 4.5 H5.2 M4.2 3.5 V5.5 M11.3 3.6 H13.1 M12.2 2.7 V4.5" stroke="#d8ecff" stroke-width="0.8"/><path d="M8.6 3.2 a1.4 1.4 0 1 0 0.2 2.8" stroke="#e8f4ff" stroke-width="0.9" fill="none"/></svg><span class="t">Swisstopo - ch.swisstopo.vec25-einzelobjekte</span></div>
<div class="row" style="top:702px"><div class="hdots"></div><svg class="ic" width="16" height="15" viewBox="0 0 16 15"><rect x="0.5" y="0.5" width="15" height="14" rx="1.5" fill="#fff" stroke="#707070"/><rect x="2" y="2" width="12" height="10" fill="#4790d8"/><path d="M2 12 L2 9.5 L5.5 6 L9 9 L11.5 7 L14 9.5 L14 12Z" fill="#525252"/><path d="M3.2 4.5 H5.2 M4.2 3.5 V5.5 M11.3 3.6 H13.1 M12.2 2.7 V4.5" stroke="#d8ecff" stroke-width="0.8"/><path d="M8.6 3.2 a1.4 1.4 0 1 0 0.2 2.8" stroke="#e8f4ff" stroke-width="0.9" fill="none"/></svg><span class="t">Swisstopo - ch.swisstopo.vec25-gebaeude</span></div>
<div class="row" style="top:720px"><div class="hdots"></div><svg class="ic" width="16" height="15" viewBox="0 0 16 15"><rect x="0.5" y="0.5" width="15" height="14" rx="1.5" fill="#fff" stroke="#707070"/><rect x="2" y="2" width="12" height="10" fill="#4790d8"/><path d="M2 12 L2 9.5 L5.5 6 L9 9 L11.5 7 L14 9.5 L14 12Z" fill="#525252"/><path d="M3.2 4.5 H5.2 M4.2 3.5 V5.5 M11.3 3.6 H13.1 M12.2 2.7 V4.5" stroke="#d8ecff" stroke-width="0.8"/><path d="M8.6 3.2 a1.4 1.4 0 1 0 0.2 2.8" stroke="#e8f4ff" stroke-width="0.9" fill="none"/></svg><span class="t">Swisstopo - ch.swisstopo.vec25-gewaessernetz_referenz</span></div>
<div class="row" style="top:738px"><div class="hdots"></div><svg class="ic" width="16" height="15" viewBox="0 0 16 15"><rect x="0.5" y="0.5" width="15" height="14" rx="1.5" fill="#fff" stroke="#707070"/><rect x="2" y="2" width="12" height="10" fill="#4790d8"/><path d="M2 12 L2 9.5 L5.5 6 L9 9 L11.5 7 L14 9.5 L14 12Z" fill="#525252"/><path d="M3.2 4.5 H5.2 M4.2 3.5 V5.5 M11.3 3.6 H13.1 M12.2 2.7 V4.5" stroke="#d8ecff" stroke-width="0.8"/><path d="M8.6 3.2 a1.4 1.4 0 1 0 0.2 2.8" stroke="#e8f4ff" stroke-width="0.9" fill="none"/></svg><span class="t">Swisstopo - ch.swisstopo.vec25-heckenbaeume</span></div>
<div class="row" style="top:756px"><div class="hdots"></div><svg class="ic" width="16" height="15" viewBox="0 0 16 15"><rect x="0.5" y="0.5" width="15" height="14" rx="1.5" fill="#fff" stroke="#707070"/><rect x="2" y="2" width="12" height="10" fill="#4790d8"/><path d="M2 12 L2 9.5 L5.5 6 L9 9 L11.5 7 L14 9.5 L14 12Z" fill="#525252"/><path d="M3.2 4.5 H5.2 M4.2 3.5 V5.5 M11.3 3.6 H13.1 M12.2 2.7 V4.5" stroke="#d8ecff" stroke-width="0.8"/><path d="M8.6 3.2 a1.4 1.4 0 1 0 0.2 2.8" stroke="#e8f4ff" stroke-width="0.9" fill="none"/></svg><span class="t">Swisstopo - ch.swisstopo.vec25-primaerflaechen</span></div>
<div class="row" style="top:774px"><div class="hdots"></div><svg class="ic" width="16" height="15" viewBox="0 0 16 15"><rect x="0.5" y="0.5" width="15" height="14" rx="1.5" fill="#fff" stroke="#707070"/><rect x="2" y="2" width="12" height="10" fill="#4790d8"/><path d="M2 12 L2 9.5 L5.5 6 L9 9 L11.5 7 L14 9.5 L14 12Z" fill="#525252"/><path d="M3.2 4.5 H5.2 M4.2 3.5 V5.5 M11.3 3.6 H13.1 M12.2 2.7 V4.5" stroke="#d8ecff" stroke-width="0.8"/><path d="M8.6 3.2 a1.4 1.4 0 1 0 0.2 2.8" stroke="#e8f4ff" stroke-width="0.9" fill="none"/></svg><span class="t">Swisstopo - ch.swisstopo.verschiebungsvektoren-tsp1</span></div>
<div class="row" style="top:792px"><div class="hdots"></div><svg class="ic" width="16" height="15" viewBox="0 0 16 15"><rect x="0.5" y="0.5" width="15" height="14" rx="1.5" fill="#fff" stroke="#707070"/><rect x="2" y="2" width="12" height="10" fill="#4790d8"/><path d="M2 12 L2 9.5 L5.5 6 L9 9 L11.5 7 L14 9.5 L14 12Z" fill="#525252"/><path d="M3.2 4.5 H5.2 M4.2 3.5 V5.5 M11.3 3.6 H13.1 M12.2 2.7 V4.5" stroke="#d8ecff" stroke-width="0.8"/><path d="M8.6 3.2 a1.4 1.4 0 1 0 0.2 2.8" stroke="#e8f4ff" stroke-width="0.9" fill="none"/></svg><span class="t">Swisstopo - ch.swisstopo.verschiebungsvektoren-tsp2</span></div>
<div class="row" style="top:810px"><div class="hdots"></div><svg class="ic" width="16" height="15" viewBox="0 0 16 15"><rect x="0.5" y="0.5" width="15" height="14" rx="1.5" fill="#fff" stroke="#707070"/><rect x="2" y="2" width="12" height="10" fill="#4790d8"/><path d="M2 12 L2 9.5 L5.5 6 L9 9 L11.5 7 L14 9.5 L14 12Z" fill="#525252"/><path d="M3.2 4.5 H5.2 M4.2 3.5 V5.5 M11.3 3.6 H13.1 M12.2 2.7 V4.5" stroke="#d8ecff" stroke-width="0.8"/><path d="M8.6 3.2 a1.4 1.4 0 1 0 0.2 2.8" stroke="#e8f4ff" stroke-width="0.9" fill="none"/></svg><span class="t">Swisstopo - ch.swisstopo.zeitreihen</span></div>
<div class="row" style="top:828px"><div class="hdots"></div><svg class="ic" width="16" height="15" viewBox="0 0 16 15"><rect x="0.5" y="0.5" width="15" height="14" rx="1.5" fill="#fff" stroke="#707070"/><rect x="2" y="2" width="12" height="10" fill="#4790d8"/><path d="M2 12 L2 9.5 L5.5 6 L9 9 L11.5 7 L14 9.5 L14 12Z" fill="#525252"/><path d="M3.2 4.5 H5.2 M4.2 3.5 V5.5 M11.3 3.6 H13.1 M12.2 2.7 V4.5" stroke="#d8ecff" stroke-width="0.8"/><path d="M8.6 3.2 a1.4 1.4 0 1 0 0.2 2.8" stroke="#e8f4ff" stroke-width="0.9" fill="none"/></svg><span class="t">Swisstopo - ch.vbs.armee-kriegsdenkmaeler</span></div>
<div class="row" style="top:846px"><div class="hdots"></div><svg class="ic" width="16" height="15" viewBox="0 0 16 15"><rect x="0.5" y="0.5" width="15" height="14" rx="1.5" fill="#fff" stroke="#707070"/><rect x="2" y="2" width="12" height="10" fill="#4790d8"/><path d="M2 12 L2 9.5 L5.5 6 L9 9 L11.5 7 L14 9.5 L14 12Z" fill="#525252"/><path d="M3.2 4.5 H5.2 M4.2 3.5 V5.5 M11.3 3.6 H13.1 M12.2 2.7 V4.5" stroke="#d8ecff" stroke-width="0.8"/><path d="M8.6 3.2 a1.4 1.4 0 1 0 0.2 2.8" stroke="#e8f4ff" stroke-width="0.9" fill="none"/></svg><span class="t">Swisstopo - ch.vbs.grunddispositiv-zeus</span></div>
<div class="row" style="top:864px"><div class="hdots"></div><svg class="ic" width="16" height="15" viewBox="0 0 16 15"><rect x="0.5" y="0.5" width="15" height="14" rx="1.5" fill="#fff" stroke="#707070"/><rect x="2" y="2" width="12" height="10" fill="#4790d8"/><path d="M2 12 L2 9.5 L5.5 6 L9 9 L11.5 7 L14 9.5 L14 12Z" fill="#525252"/><path d="M3.2 4.5 H5.2 M4.2 3.5 V5.5 M11.3 3.6 H13.1 M12.2 2.7 V4.5" stroke="#d8ecff" stroke-width="0.8"/><path d="M8.6 3.2 a1.4 1.4 0 1 0 0.2 2.8" stroke="#e8f4ff" stroke-width="0.9" fill="none"/></svg><span class="t">Swisstopo - ch.vbs.logistikraeume-armeelogistikcenter</span></div>
<div class="row" style="top:882px"><div class="hdots"></div><svg class="ic" width="16" height="15" viewBox="0 0 16 15"><rect x="0.5" y="0.5" width="15" height="14" rx="1.5" fill="#fff" stroke="#707070"/><rect x="2" y="2" width="12" height="10" fill="#4790d8"/><path d="M2 12 L2 9.5 L5.5 6 L9 9 L11.5 7 L14 9.5 L14 12Z" fill="#525252"/><path d="M3.2 4.5 H5.2 M4.2 3.5 V5.5 M11.3 3.6 H13.1 M12.2 2.7 V4.5" stroke="#d8ecff" stroke-width="0.8"/><path d="M8.6 3.2 a1.4 1.4 0 1 0 0.2 2.8" stroke="#e8f4ff" stroke-width="0.9" fill="none"/></svg><span class="t">Swisstopo - ch.vbs.milairspacechart</span></div>
</div>
<!-- scrollbar -->
<div class="abs" style="left:574px;top:110px;width:18px;height:901px;background:#f0f0f0"></div>
<div class="abs" style="left:582px;top:793px;width:2px;height:102px;background:#858585"></div>
<div id="mappanel">
 <div id="toolbar">
  <svg class="abs" style="left:11px;top:4px" width="16" height="16" viewBox="0 0 16 16"><circle cx="6.5" cy="6.5" r="5.4" fill="#fff" stroke="#000058" stroke-width="1.3"/><path d="M3.3 6.5 H9.7 M6.5 3.3 V9.7" stroke="#000058" stroke-width="2.3"/><line x1="10.2" y1="10.2" x2="14.6" y2="14.6" stroke="#000058" stroke-width="2.2" stroke-linecap="round"/></svg>
  <span style="left:32px">Zoom in</span>
  <span style="left:118px;color:#a0a0a0">Zoom out</span>
  <div class="abs" style="left:183px;top:2px;width:1px;height:22px;background:#a0a0a0"></div>
  <div class="abs" style="left:188px;top:2px;width:90px;height:22px;background:#f8f8f8;border-top:1px solid #a0a0a0;border-left:1px solid #a0a0a0"></div>
  <svg class="abs" style="left:202px;top:6px" width="14" height="16" viewBox="0 0 14 16"><path d="M3.5 9 V5 a1 1 0 0 1 2 0 V2.5 a1 1 0 0 1 2 0 V2 a1 1 0 0 1 2 0 V3 a1 1 0 0 1 2 0 V10.5 Q11.5 15 8 15 H6.5 Q4.5 15 3 12.5 L1 9.5 Q1 8.5 2 8.7 Z M5.5 5 V8 M7.5 2.5 V8 M9.5 2.5 V8" fill="#fff" stroke="#3a3a3a" stroke-width="0.9" stroke-linejoin="round"/></svg>
  <span style="left:219px">Pan map</span>
  <svg class="abs" style="left:286px;top:6px" width="15" height="15" viewBox="0 0 15 15"><rect x="1" y="1" width="13" height="13" rx="2.5" fill="none" stroke="#333" stroke-width="1.2" stroke-dasharray="3 2"/></svg>
  <span style="left:305px">Rectangle</span>
  <div class="abs" style="left:376px;top:2px;width:280px;height:22px;background:#fff"></div>
  <svg class="abs" style="left:663px;top:5px" width="16" height="16" viewBox="0 0 16 16"><path d="M8 0.5 V11 M4.5 7 L8 10.5 L11.5 7 M2.5 11.5 V13 Q2.5 14.5 4 14.5 H12 Q13.5 14.5 13.5 13 V11.5" fill="none" stroke="#555" stroke-width="1.1"/></svg>
  <span style="left:683px">Download</span>
 </div>
 <div class="abs" style="left:0;top:29px;width:1317px;height:937px;overflow:hidden">
<svg width="1317" height="935" viewBox="601 74 1317 935" style="position:absolute;left:0;top:0">
<defs>
 <clipPath id="cc"><path d="M939.0,570.7 L942.0,553.0 L944.0,527.0 L971.0,505.0 L991.0,484.0 L1022.0,456.0 L1036.0,431.0 L1036.0,421.0 L1046.0,421.0 L1046.0,413.0 L1024.0,413.0 L1024.0,409.0 L1036.0,405.0 L1042.0,374.0 L1081.0,377.4 L1087.0,393.0 L1099.0,387.0 L1121.0,371.0 L1132.0,357.0 L1148.0,353.0 L1171.0,351.0 L1174.0,364.0 L1194.6,352.7 L1215.0,355.6 L1238.0,351.0 L1258.6,342.5 L1280.0,345.4 L1295.0,354.0 L1311.0,350.0 L1312.0,335.0 L1302.0,334.0 L1302.0,309.0 L1322.5,293.0 L1353.0,293.0 L1362.0,303.0 L1363.0,309.0 L1376.0,312.0 L1385.0,320.7 L1388.0,333.8 L1405.0,331.0 L1423.0,329.0 L1463.5,349.8 L1498.0,376.0 L1510.0,379.0 L1521.6,384.7 L1527.0,396.0 L1524.5,408.0 L1516.0,425.0 L1510.0,437.0 L1513.0,454.0 L1521.6,469.0 L1524.5,489.0 L1539.0,495.0 L1565.0,504.0 L1574.0,521.0 L1597.0,536.0 L1609.0,547.0 L1632.0,541.6 L1646.6,524.0 L1655.0,509.6 L1667.0,512.6 L1678.6,524.0 L1681.5,533.0 L1678.6,559.0 L1672.8,580.0 L1664.0,589.0 L1670.0,600.7 L1678.6,612.0 L1672.8,629.8 L1646.6,629.8 L1635.0,618.0 L1623.0,615.0 L1603.0,632.7 L1606.0,658.8 L1617.5,667.6 L1611.7,685.0 L1623.0,699.5 L1620.5,714.0 L1603.0,714.0 L1594.0,699.5 L1585.6,682.0 L1568.0,679.0 L1550.7,685.0 L1539.0,690.8 L1521.6,696.6 L1507.0,690.8 L1492.6,676.3 L1489.7,647.0 L1475.0,641.4 L1463.5,644.3 L1460.6,664.7 L1460.6,688.0 L1452.0,705.0 L1443.0,722.8 L1428.6,740.0 L1428.6,757.7 L1417.0,769.0 L1411.0,778.0 L1422.8,792.6 L1425.7,804.0 L1417.0,821.6 L1393.7,816.0 L1393.7,798.0 L1388.0,784.0 L1373.0,781.0 L1376.0,763.5 L1370.5,749.0 L1353.0,749.0 L1335.6,740.0 L1324.0,722.8 L1309.4,711.0 L1306.5,685.0 L1309.4,656.0 L1289.0,670.5 L1277.0,685.0 L1264.0,699.5 L1258.6,717.0 L1252.8,734.4 L1244.0,749.0 L1229.5,769.0 L1212.0,781.0 L1197.6,795.5 L1174.0,795.5 L1159.8,783.8 L1142.0,786.7 L1119.0,801.0 L1101.6,798.0 L1084.0,813.0 L1061.0,810.0 L1052.0,792.6 L1040.6,772.0 L1021.7,760.6 L1008.6,734.4 L1010.0,714.0 L1014.4,693.7 L1003.6,673.8 L991.0,667.0 L962.0,669.4 L951.0,671.0 L943.8,676.7 L932.8,683.3 L927.7,678.0 L918.2,677.4 L909.5,687.0 L903.6,700.0 L912.0,709.8 L915.6,705.0 L920.2,708.6 L915.6,715.6 L909.8,719.0 L900.5,729.5 L888.8,738.8 L866.7,738.8 L855.0,740.0 L856.3,728.4 L856.3,715.6 L873.7,709.8 L881.9,702.8 L884.0,692.0 L888.8,684.0 L890.0,675.0 L886.5,673.7 L878.4,668.0 L874.9,661.0 L877.8,644.3 L883.6,624.0 L889.4,609.4 L904.0,592.0 L924.0,577.4 L936.0,560.0Z"/></clipPath>
 <filter id="b20" filterUnits="userSpaceOnUse" x="800" y="250" width="950" height="650"><feGaussianBlur stdDeviation="20"/></filter>
 <filter id="b12" filterUnits="userSpaceOnUse" x="800" y="250" width="950" height="650"><feGaussianBlur stdDeviation="12"/></filter>
 <filter id="vblur" filterUnits="userSpaceOnUse" x="800" y="250" width="950" height="650"><feGaussianBlur stdDeviation="1.2"/></filter>
 <mask id="alpsm" maskUnits="userSpaceOnUse" x="800" y="250" width="950" height="650"><path d="M990.0,690.0 L1010.0,650.0 L1060.0,622.0 L1130.0,602.0 L1200.0,585.0 L1260.0,565.0 L1300.0,535.0 L1340.0,510.0 L1400.0,500.0 L1440.0,485.0 L1470.0,445.0 L1510.0,425.0 L1530.0,470.0 L1600.0,490.0 L1700.0,500.0 L1700.0,860.0 L980.0,860.0Z" fill="#fff" filter="url(#b20)"/></mask>
 <mask id="plateaum" maskUnits="userSpaceOnUse" x="800" y="250" width="950" height="650"><rect x="800" y="250" width="950" height="650" fill="#fff"/><path d="M990.0,690.0 L1010.0,650.0 L1060.0,622.0 L1130.0,602.0 L1200.0,585.0 L1260.0,565.0 L1300.0,535.0 L1340.0,510.0 L1400.0,500.0 L1440.0,485.0 L1470.0,445.0 L1510.0,425.0 L1530.0,470.0 L1600.0,490.0 L1700.0,500.0 L1700.0,860.0 L980.0,860.0Z" fill="#777" filter="url(#b20)"/></mask>
 <mask id="juram" maskUnits="userSpaceOnUse" x="800" y="250" width="950" height="650"><path d="M880.0,680.0 L876.0,640.0 L895.0,600.0 L935.0,550.0 L985.0,495.0 L1030.0,440.0 L1090.0,400.0 L1160.0,372.0 L1230.0,355.0 L1300.0,340.0 L1320.0,372.0 L1250.0,390.0 L1180.0,410.0 L1120.0,440.0 L1070.0,490.0 L1020.0,545.0 L975.0,600.0 L930.0,655.0 L900.0,710.0Z" fill="#fff" filter="url(#b12)"/></mask>
 <mask id="prealpm" maskUnits="userSpaceOnUse" x="800" y="250" width="950" height="650"><path d="M995.0,665.0 L1030.0,625.0 L1100.0,600.0 L1170.0,585.0 L1240.0,565.0 L1290.0,535.0 L1340.0,505.0 L1420.0,480.0 L1500.0,440.0 L1540.0,470.0 L1520.0,510.0 L1450.0,530.0 L1390.0,555.0 L1330.0,590.0 L1260.0,620.0 L1180.0,640.0 L1100.0,655.0 L1040.0,690.0Z" fill="#fff" filter="url(#b12)"/></mask>
 <mask id="ticm" maskUnits="userSpaceOnUse" x="800" y="250" width="950" height="650"><path d="M1300.0,645.0 L1465.0,635.0 L1465.0,700.0 L1440.0,760.0 L1425.0,830.0 L1390.0,820.0 L1365.0,760.0 L1325.0,745.0 L1300.0,700.0Z" fill="#fff" filter="url(#b12)"/></mask>
 <mask id="napfm" maskUnits="userSpaceOnUse" x="800" y="250" width="950" height="650"><path d="M1185.0,470.0 L1230.0,455.0 L1265.0,480.0 L1255.0,530.0 L1200.0,535.0 L1180.0,505.0Z" fill="#fff" filter="url(#b12)"/></mask>
 <mask id="corem" maskUnits="userSpaceOnUse" x="800" y="250" width="950" height="650"><path d="M1040.0,665.0 L1100.0,642.0 L1200.0,612.0 L1280.0,588.0 L1340.0,562.0 L1400.0,548.0 L1395.0,590.0 L1310.0,650.0 L1260.0,700.0 L1210.0,770.0 L1110.0,795.0 L1055.0,785.0 L1040.0,720.0Z" fill="#fff" filter="url(#b20)"/></mask>
 <mask id="core2m" maskUnits="userSpaceOnUse" x="800" y="250" width="950" height="650"><path d="M1480.0,640.0 L1560.0,600.0 L1620.0,640.0 L1600.0,700.0 L1520.0,700.0Z" fill="#fff" filter="url(#b20)"/></mask>
 <mask id="glam" maskUnits="userSpaceOnUse" x="800" y="250" width="950" height="650"><path d="M1130.0,650.0 L1200.0,625.0 L1260.0,605.0 L1300.0,590.0 L1310.0,610.0 L1260.0,640.0 L1190.0,665.0 L1140.0,680.0Z" fill="#fff" filter="url(#b12)"/></mask>
 <filter id="green" color-interpolation-filters="sRGB" filterUnits="userSpaceOnUse" x="840" y="280" width="860" height="580">
  <feTurbulence type="fractalNoise" baseFrequency="0.13 0.16" numOctaves="3" seed="3"/>
  <feColorMatrix type="matrix" values="0 0 0 0 0.58  0 0 0 0 0.79  0 0 0 0 0.54  10 0 0 0 -5.8"/>
 </filter>
 <filter id="green2" color-interpolation-filters="sRGB" filterUnits="userSpaceOnUse" x="840" y="280" width="860" height="580">
  <feTurbulence type="fractalNoise" baseFrequency="0.09 0.12" numOctaves="3" seed="21"/>
  <feColorMatrix type="matrix" values="0 0 0 0 0.55  0 0 0 0 0.76  0 0 0 0 0.50  10 0 0 0 -4.6"/>
 </filter>
 <filter id="streak" color-interpolation-filters="sRGB" filterUnits="userSpaceOnUse" x="700" y="200" width="1100" height="800">
  <feTurbulence type="fractalNoise" baseFrequency="0.025 0.22" numOctaves="3" seed="5"/>
  <feColorMatrix type="matrix" values="0 0 0 0 0.48  0 0 0 0 0.72  0 0 0 0 0.45  9 0 0 0 -4.3"/>
 </filter>
 <filter id="vnet" color-interpolation-filters="sRGB" filterUnits="userSpaceOnUse" x="840" y="280" width="860" height="580">
  <feTurbulence type="turbulence" baseFrequency="0.045" numOctaves="2" seed="4"/>
  <feColorMatrix type="matrix" values="0 0 0 0 0.52  0 0 0 0 0.76  0 0 0 0 0.48  -7 0 0 0 1.3"/>
 </filter>
 <filter id="relief" color-interpolation-filters="sRGB" filterUnits="userSpaceOnUse" x="840" y="280" width="860" height="580">
  <feTurbulence type="fractalNoise" baseFrequency="0.05" numOctaves="5" seed="11"/>
  <feColorMatrix type="matrix" values="0 0 0 0 0  0 0 0 0 0  0 0 0 0 0  1 0 0 0 0" result="a"/>
  <feDiffuseLighting in="a" surfaceScale="8" diffuseConstant="1.0" lighting-color="#ffffff"><feDistantLight azimuth="225" elevation="50"/></feDiffuseLighting>
  <feColorMatrix type="matrix" values="0.58 0 0 0 0.41  0 0.58 0 0 0.42  0 0 0.58 0 0.45  0 0 0 0 1"/>
 </filter>
</defs>
<g clip-path="url(#cc)">
 <rect x="840" y="280" width="860" height="580" fill="#dcdcdc"/>
 <g mask="url(#alpsm)" opacity="0.95"><rect x="840" y="280" width="860" height="580" filter="url(#relief)"/></g>
 <g mask="url(#corem)" opacity="0.1"><rect x="840" y="280" width="860" height="580" fill="#606468"/></g>
 <g mask="url(#core2m)" opacity="0.08"><rect x="840" y="280" width="860" height="580" fill="#606468"/></g>
 <g mask="url(#glam)" opacity="0.35"><rect x="840" y="280" width="860" height="580" fill="#e8f2f5"/></g>
 <g mask="url(#plateaum)" opacity="0.8"><rect x="840" y="280" width="860" height="580" filter="url(#green)"/></g>
 <g mask="url(#juram)" opacity="0.85"><rect x="700" y="200" width="1100" height="800" filter="url(#streak)" transform="rotate(-38 1080 520)"/></g>
 <g mask="url(#alpsm)" opacity="0.65"><rect x="840" y="280" width="860" height="580" filter="url(#vnet)"/></g>
 <g mask="url(#prealpm)" opacity="0.45"><rect x="840" y="280" width="860" height="580" filter="url(#green2)"/></g>
 <g mask="url(#napfm)" opacity="0.55"><rect x="840" y="280" width="860" height="580" filter="url(#green2)"/></g>
 <g mask="url(#ticm)" opacity="0.9"><rect x="840" y="280" width="860" height="580" filter="url(#green2)"/></g>
 <g fill="none" stroke-linecap="round" stroke-linejoin="round" filter="url(#vblur)">
  <path d="M1026.0,677.0 L1044.0,709.0 L1058.0,742.0 L1087.0,724.6 L1122.0,705.0 L1148.0,695.0 L1166.0,691.0 L1209.0,695.0 L1235.6,689.7 L1262.0,674.0 L1290.0,650.0 L1330.0,620.0 L1362.0,599.0 L1400.0,579.0" stroke="#d4d8d2" stroke-width="7" opacity="0.85"/>
  <path d="M1058.0,742.0 L1068.0,780.0 L1075.0,800.0" stroke="#a6d09e" stroke-width="4" opacity="0.85"/>
  <path d="M1087.0,724.0 L1095.0,760.0 L1100.0,790.0" stroke="#a6d09e" stroke-width="4" opacity="0.85"/>
  <path d="M1122.0,705.0 L1130.0,740.0 L1140.0,780.0" stroke="#a6d09e" stroke-width="4" opacity="0.85"/>
  <path d="M1197.0,721.0 L1190.0,745.0 L1183.0,765.0" stroke="#a6d09e" stroke-width="4" opacity="0.85"/>
  <path d="M1166.0,691.0 L1175.0,720.0 L1197.0,721.0" stroke="#a6d09e" stroke-width="4" opacity="0.85"/>
  <path d="M1209.0,695.0 L1217.0,725.0 L1225.0,760.0" stroke="#a6d09e" stroke-width="4" opacity="0.85"/>
  <path d="M1338.0,535.0 L1345.0,565.0 L1352.0,600.0" stroke="#a6d09e" stroke-width="4" opacity="0.85"/>
  <path d="M1330.0,640.0 L1360.0,690.0 L1380.0,730.0 L1395.0,770.0" stroke="#a6d09e" stroke-width="4" opacity="0.85"/>
  <path d="M1410.0,630.0 L1395.0,690.0 L1385.0,730.0" stroke="#a6d09e" stroke-width="4" opacity="0.85"/>
  <path d="M1460.0,640.0 L1520.0,610.0 L1580.0,575.0 L1640.0,545.0 L1670.0,530.0" stroke="#a6d09e" stroke-width="4" opacity="0.85"/>
  <path d="M1430.0,560.0 L1470.0,520.0 L1500.0,500.0 L1515.0,470.0 L1522.0,430.0" stroke="#a6d09e" stroke-width="4" opacity="0.85"/>
  <path d="M1470.0,600.0 L1500.0,560.0 L1540.0,540.0 L1580.0,520.0" stroke="#a6d09e" stroke-width="4" opacity="0.85"/>
  <path d="M1100.0,600.0 L1120.0,640.0 L1140.0,670.0" stroke="#a6d09e" stroke-width="4" opacity="0.85"/>
  <path d="M1040.0,620.0 L1060.0,650.0 L1080.0,690.0" stroke="#a6d09e" stroke-width="4" opacity="0.85"/>
  <path d="M1290.0,560.0 L1300.0,600.0 L1320.0,620.0" stroke="#a6d09e" stroke-width="4" opacity="0.85"/>
  <path d="M1400.0,520.0 L1420.0,560.0 L1450.0,600.0" stroke="#a6d09e" stroke-width="4" opacity="0.85"/>
  <path d="M1600.0,640.0 L1580.0,600.0 L1560.0,560.0" stroke="#a6d09e" stroke-width="4" opacity="0.85"/>
 </g>
</g>
<path d="M1291,279.5h27M1318,279.5h27M1345,279.5h27M1291.5,279v27M1372.5,279v27M1372,306.5h27M1399,306.5h27M1426,306.5h27M1129,333.5h27M1156,333.5h27M1183,333.5h27M1210,333.5h27M1237,333.5h27M1291.5,306v27M1264,333.5h27M1453.5,306v27M1453,333.5h27M1021,360.5h27M1048,360.5h27M1075,360.5h27M1129.5,333v27M1102,360.5h27M1480.5,333v27M1480,360.5h27M1507,360.5h27M1021.5,360v27M1534.5,360v27M1021.5,387v27M1534.5,387v27M1021.5,414v27M994,441.5h27M1534.5,414v27M994.5,441v27M967,468.5h27M1534.5,441v27M1534,468.5h27M967.5,468v27M940,495.5h27M1561.5,468v27M1561,495.5h27M1642,495.5h27M1669,495.5h27M940.5,495v27M1588.5,495v27M1588,522.5h27M1642.5,495v27M1615,522.5h27M1696.5,495v27M940.5,522v27M913,549.5h27M1696.5,522v27M913.5,549v27M886,576.5h27M1696.5,549v27M886.5,576v27M859,603.5h27M1696.5,576v27M859.5,603v27M1615,630.5h27M1642,630.5h27M1696.5,603v27M1669,630.5h27M859.5,630v27M1615.5,630v27M1615,657.5h27M859.5,657v27M940,684.5h27M967,684.5h27M1642.5,657v27M859.5,684v27M832,711.5h27M940.5,684v27M994.5,684v27M1264,711.5h27M1453,711.5h27M1480,711.5h27M1507,711.5h27M1534,711.5h27M1561,711.5h27M1642.5,684v27M832.5,711v27M940.5,711v27M913,738.5h27M994.5,711v27M1264.5,711v27M1291.5,711v27M1291,738.5h27M1453.5,711v27M1588.5,711v27M1588,738.5h27M1642.5,711v27M1615,738.5h27M832.5,738v27M832,765.5h27M859,765.5h27M913.5,738v27M886,765.5h27M994.5,738v27M994,765.5h27M1264.5,738v27M1237,765.5h27M1318.5,738v27M1318,765.5h27M1345,765.5h27M1453.5,738v27M1426,765.5h27M1021.5,765v27M1021,792.5h27M1237.5,765v27M1210,792.5h27M1372.5,765v27M1426.5,765v27M1048.5,792v27M1048,819.5h27M1075,819.5h27M1102,819.5h27M1129,819.5h27M1156,819.5h27M1210.5,792v27M1183,819.5h27M1372.5,792v27M1372,819.5h27M1426.5,792v27M1399.5,819v27M1426.5,819v27M1399,846.5h27" stroke="#ececec" stroke-width="1" fill="none"/>
<path d="M1316,284.5h9M1325,284.5h9M1334,284.5h9M1343,284.5h9M1352,284.5h9M1316.5,284v9M1307,293.5h9M1361.5,284v9M1361,293.5h9M1307.5,293v9M1298,302.5h9M1370.5,293v9M1370,302.5h9M1298.5,302v9M1379.5,302v9M1379,311.5h9M1298.5,311v9M1388.5,311v9M1388,320.5h9M1415,320.5h9M1424,320.5h9M1298.5,320v9M1397.5,320v9M1397,329.5h9M1415.5,320v9M1406,329.5h9M1433.5,320v9M1433,329.5h9M1442,329.5h9M1244,338.5h9M1253,338.5h9M1262,338.5h9M1271,338.5h9M1280,338.5h9M1298.5,329v9M1298,338.5h9M1451.5,329v9M1451,338.5h9M1460,338.5h9M1127,347.5h9M1136,347.5h9M1145,347.5h9M1154,347.5h9M1163,347.5h9M1172,347.5h9M1181,347.5h9M1190,347.5h9M1199,347.5h9M1208,347.5h9M1217,347.5h9M1226,347.5h9M1244.5,338v9M1235,347.5h9M1289.5,338v9M1289,347.5h9M1307.5,338v9M1298,347.5h9M1469.5,338v9M1469,347.5h9M1127.5,347v9M1118,356.5h9M1478.5,347v9M1478,356.5h9M1037,365.5h9M1118.5,356v9M1109,365.5h9M1487.5,356v9M1487,365.5h9M1496,365.5h9M1037.5,365v9M1046.5,365v9M1046,374.5h9M1055,374.5h9M1064,374.5h9M1073,374.5h9M1082,374.5h9M1109.5,365v9M1100,374.5h9M1505.5,365v9M1505,374.5h9M1514,374.5h9M1037.5,374v9M1091.5,374v9M1100.5,374v9M1091,383.5h9M1523.5,374v9M1523,383.5h9M1037.5,383v9M1028,392.5h9M1532.5,383v9M1028.5,392v9M1019,401.5h9M1532.5,392v9M1019.5,401v9M1532.5,401v9M1019.5,410v9M1019,419.5h9M1532.5,410v9M1523,419.5h9M1028.5,419v9M1523.5,419v9M1028.5,428v9M1019,437.5h9M1523.5,428v9M1514,437.5h9M1019.5,437v9M1514.5,437v9M1514,446.5h9M1019.5,446v9M1010,455.5h9M1523.5,446v9M1010.5,455v9M1001,464.5h9M1523.5,455v9M1523,464.5h9M1001.5,464v9M992,473.5h9M1532.5,464v9M992.5,473v9M983,482.5h9M1532.5,473v9M983.5,482v9M974,491.5h9M1532.5,482v9M1532,491.5h9M1541,491.5h9M1550,491.5h9M974.5,491v9M965,500.5h9M1559.5,491v9M1559,500.5h9M1568,500.5h9M1649,500.5h9M947,509.5h9M965.5,500v9M956,509.5h9M1577.5,500v9M1649.5,500v9M1658.5,500v9M1658,509.5h9M1667,509.5h9M947.5,509v9M938,518.5h9M1577.5,509v9M1577,518.5h9M1649.5,509v9M1640,518.5h9M1676.5,509v9M1676,518.5h9M938.5,518v9M1586.5,518v9M1586,527.5h9M1595,527.5h9M1640.5,518v9M1631,527.5h9M1685.5,518v9M938.5,527v9M1604.5,527v9M1604,536.5h9M1613,536.5h9M1631.5,527v9M1622,536.5h9M1685.5,527v9M938.5,536v9M1685.5,536v9M938.5,545v9M929,554.5h9M1685.5,545v9M929.5,554v9M920,563.5h9M1685.5,554v9M920.5,563v9M911,572.5h9M1685.5,563v9M911.5,572v9M902,581.5h9M1685.5,572v9M1676,581.5h9M902.5,581v9M893,590.5h9M1676.5,581v9M893.5,590v9M884,599.5h9M1676.5,590v9M1676,599.5h9M884.5,599v9M1685.5,599v9M884.5,608v9M875,617.5h9M1685.5,608v9M875.5,617v9M1613,626.5h9M1622,626.5h9M1631,626.5h9M1685.5,617v9M1676,626.5h9M875.5,626v9M1613.5,626v9M1640.5,626v9M1640,635.5h9M1649,635.5h9M1658,635.5h9M1676.5,626v9M1667,635.5h9M875.5,635v9M866,644.5h9M1469,644.5h9M1613.5,635v9M866.5,644v9M1469.5,644v9M1478.5,644v9M1478,653.5h9M1613.5,644v9M866.5,653v9M1469.5,653v9M1487.5,653v9M1613.5,653v9M1613,662.5h9M866.5,662v9M866,671.5h9M965,671.5h9M974,671.5h9M983,671.5h9M1469.5,662v9M1487.5,662v9M1622.5,662v9M875.5,671v9M875,680.5h9M947,680.5h9M965.5,671v9M956,680.5h9M992.5,671v9M992,680.5h9M1289,680.5h9M1469.5,671v9M1487.5,671v9M1622.5,671v9M884.5,680v9M875,689.5h9M911,689.5h9M920,689.5h9M929,689.5h9M947.5,680v9M938,689.5h9M1001.5,680v9M1001,689.5h9M1289.5,680v9M1280,689.5h9M1298.5,680v9M1469.5,680v9M1487.5,680v9M1487,689.5h9M1550,689.5h9M1559,689.5h9M1568,689.5h9M1577,689.5h9M1622.5,680v9M1622,689.5h9M875.5,689v9M866,698.5h9M911.5,689v9M911,698.5h9M1010.5,689v9M1280.5,689v9M1271,698.5h9M1298.5,689v9M1469.5,689v9M1460,698.5h9M1496.5,689v9M1496,698.5h9M1505,698.5h9M1514,698.5h9M1523,698.5h9M1532,698.5h9M1550.5,689v9M1541,698.5h9M1586.5,689v9M1631.5,689v9M848,707.5h9M866.5,698v9M857,707.5h9M920.5,698v9M920,707.5h9M1010.5,698v9M1001,707.5h9M1271.5,698v9M1298.5,698v9M1298,707.5h9M1460.5,698v9M1586.5,698v9M1586,707.5h9M1631.5,698v9M848.5,707v9M929.5,707v9M920,716.5h9M1001.5,707v9M1271.5,707v9M1262,716.5h9M1307.5,707v9M1460.5,707v9M1451,716.5h9M1595.5,707v9M1595,716.5h9M1604,716.5h9M1613,716.5h9M1631.5,707v9M1622,716.5h9M848.5,716v9M920.5,716v9M911,725.5h9M1001.5,716v9M1262.5,716v9M1307.5,716v9M1307,725.5h9M1451.5,716v9M848.5,725v9M911.5,725v9M902,734.5h9M1001.5,725v9M1262.5,725v9M1316.5,725v9M1316,734.5h9M1451.5,725v9M1442,734.5h9M848.5,734v9M848,743.5h9M857,743.5h9M866,743.5h9M875,743.5h9M884,743.5h9M902.5,734v9M893,743.5h9M1001.5,734v9M1001,743.5h9M1262.5,734v9M1253,743.5h9M1325.5,734v9M1325,743.5h9M1442.5,734v9M1433,743.5h9M1010.5,743v9M1253.5,743v9M1244,752.5h9M1334.5,743v9M1334,752.5h9M1343,752.5h9M1352,752.5h9M1361,752.5h9M1433.5,743v9M1010.5,752v9M1010,761.5h9M1244.5,752v9M1370.5,752v9M1433.5,752v9M1019.5,761v9M1019,770.5h9M1244.5,761v9M1235,770.5h9M1370.5,761v9M1433.5,761v9M1424,770.5h9M1028.5,770v9M1028,779.5h9M1235.5,770v9M1226,779.5h9M1370.5,770v9M1424.5,770v9M1037.5,779v9M1037,788.5h9M1145,788.5h9M1154,788.5h9M1208,788.5h9M1226.5,779v9M1217,788.5h9M1370.5,779v9M1370,788.5h9M1379,788.5h9M1424.5,779v9M1424,788.5h9M1046.5,788v9M1145.5,788v9M1136,797.5h9M1163.5,788v9M1163,797.5h9M1172,797.5h9M1181,797.5h9M1190,797.5h9M1208.5,788v9M1199,797.5h9M1388.5,788v9M1433.5,788v9M1046.5,797v9M1046,806.5h9M1100,806.5h9M1109,806.5h9M1118,806.5h9M1136.5,797v9M1127,806.5h9M1388.5,797v9M1433.5,797v9M1055.5,806v9M1055,815.5h9M1064,815.5h9M1073,815.5h9M1082,815.5h9M1100.5,806v9M1091,815.5h9M1388.5,806v9M1433.5,806v9M1424,815.5h9M1388.5,815v9M1388,824.5h9M1397,824.5h9M1406,824.5h9M1424.5,815v9M1415,824.5h9" stroke="#e4e4e4" stroke-width="1" fill="none"/>
<g fill="#d2ebfa">
 <path d="M1250.0,465.0 L1256.0,466.0 L1262.0,477.0 L1257.0,478.0Z"/>
 <path d="M891.2,719.0 L895.8,700.5 L902.8,684.0 L914.4,666.7 L928.4,652.8 L940.0,650.5 L954.7,639.5 L969.0,638.0 L991.0,644.6 L1009.5,652.0 L1024.0,659.0 L1030.7,666.5 L1030.0,671.0 L1020.4,671.0 L1006.0,668.0 L991.0,667.0 L962.0,669.4 L951.0,671.0 L943.8,676.7 L932.8,683.3 L927.7,678.0 L918.2,677.4 L909.8,692.3 L902.8,705.0 L895.8,715.6Z"/>
 <path d="M1414.0,290.0 L1419.0,291.0 L1432.0,303.0 L1446.0,316.0 L1461.0,323.0 L1481.0,330.0 L1496.0,334.0 L1508.0,344.0 L1525.0,355.0 L1543.0,366.0 L1546.0,372.0 L1540.0,376.0 L1525.0,377.0 L1502.0,380.0 L1494.0,378.0 L1479.0,362.0 L1461.0,346.0 L1447.0,332.0 L1436.0,328.0 L1440.0,318.0 L1428.0,305.0 L1413.0,293.0Z"/>
 <path d="M1399.0,312.0 L1404.0,311.0 L1418.0,317.0 L1428.0,322.0 L1438.0,327.0 L1436.0,330.0 L1425.0,327.0 L1410.0,321.0 L1400.0,316.0Z"/>
 <path d="M983.0,568.0 L991.0,555.0 L999.0,541.0 L1017.7,521.0 L1034.0,510.7 L1050.0,507.7 L1055.0,512.8 L1050.0,519.0 L1034.0,529.0 L1017.7,545.0 L1001.0,559.6 L990.0,568.0Z"/>
 <path d="M1062.0,492.0 L1087.0,474.0 L1089.0,478.0 L1070.6,496.5 L1062.0,498.5Z"/>
 <path d="M1052.0,529.0 L1066.5,521.0 L1068.5,525.0 L1058.0,535.0 L1052.0,534.0Z"/>
 <path d="M1327.0,414.0 L1332.0,416.0 L1348.0,438.0 L1357.0,445.0 L1383.0,451.0 L1401.0,450.0 L1402.0,454.0 L1383.0,457.0 L1355.0,452.0 L1345.0,446.0 L1330.0,424.0Z"/>
 <path d="M1428.6,472.0 L1446.0,474.0 L1463.5,477.7 L1446.0,479.0 L1428.6,478.0Z"/>
 <path d="M1287.0,494.0 L1300.0,487.0 L1308.0,470.0 L1313.0,462.0 L1318.0,466.0 L1316.0,480.0 L1322.0,488.0 L1330.0,478.0 L1342.0,476.0 L1344.0,482.0 L1332.0,490.0 L1322.0,500.0 L1330.0,506.0 L1340.0,510.0 L1338.0,520.0 L1340.0,538.0 L1335.0,540.0 L1331.0,522.0 L1328.0,514.0 L1310.0,513.0 L1295.0,514.0 L1284.0,518.0 L1281.0,514.0 L1292.0,506.0 L1300.0,500.0 L1290.0,500.0Z"/>
 <path d="M1364.0,467.0 L1372.0,472.0 L1383.0,488.0 L1378.0,490.0 L1368.0,478.0 L1362.0,472.0Z"/>
 <path d="M1159.8,577.4 L1174.0,590.0 L1194.6,595.8 L1212.0,587.0 L1232.4,572.5 L1238.0,575.4 L1218.0,593.0 L1194.6,601.6 L1177.0,597.8 L1162.7,586.0Z"/>
 <path d="M1356.0,746.0 L1382.0,728.6 L1385.0,734.4 L1367.6,749.0 L1359.0,763.5 L1353.0,781.0 L1341.4,798.0 L1335.6,816.0 L1338.5,839.0 L1332.7,845.0 L1327.0,830.0 L1324.0,810.0 L1318.0,795.5 L1318.0,789.7 L1327.0,792.6 L1338.5,781.0 L1347.0,763.5Z"/>
 <path d="M1388.0,781.0 L1405.0,772.0 L1428.6,766.4 L1422.8,772.0 L1408.0,781.0 L1399.5,789.7 L1393.7,795.5 L1390.0,790.0Z"/>
 <path d="M908.0,602.0 L915.0,595.0 L918.0,597.0 L911.0,605.0Z"/>
 <path d="M1264.0,423.0 L1268.0,425.0 L1275.0,458.0 L1271.0,460.0Z"/>
</g>
</svg>
 </div>
</div>
<div id="status">
 <div class="sp" style="left:0;width:100px;padding-left:5px">MapsID: 3922</div>
 <div class="sp" style="left:102px;width:78px">jpg</div>
 <div class="sp" style="left:182px;width:98px">MinZoom: 8</div>
 <div class="sp" style="left:282px;width:98px">MaxZoom: 19</div>
 <div class="sp" style="left:382px;width:97px">TileSize: 256</div>
 <div class="sp" style="left:482px;width:98px">EPSG:3857</div>
 <div class="sp" style="left:582px;width:1338px;font-size:13.1px">Longitude=10.354614, Latitude=47.182246, tile=8/135/89.jpg</div>
</div>
</body></html>
